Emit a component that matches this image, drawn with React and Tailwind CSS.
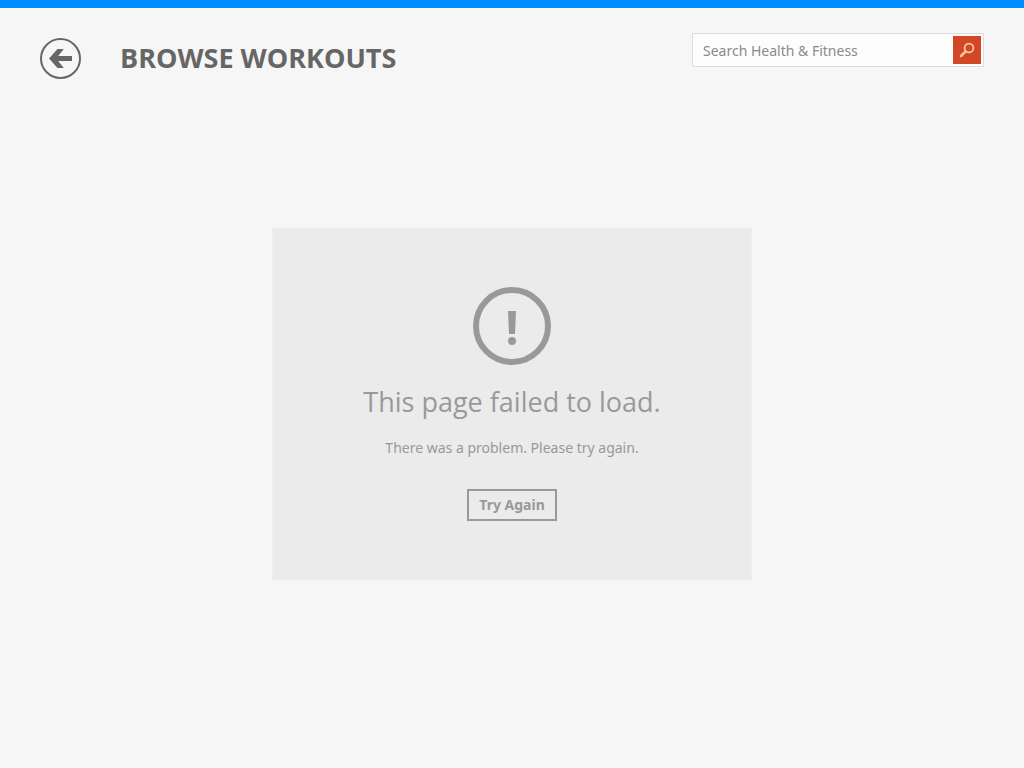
import { useState } from 'react';

const BackButton = () => (
  <button type="button" aria-label="Back" className="w-[41px] h-[41px] shrink-0 text-[#666666]">
    <svg viewBox="0 0 41 41" className="w-full h-full" aria-hidden="true">
      <circle cx="20.5" cy="20.5" r="19.5" fill="none" stroke="currentColor" strokeWidth="2" />
      <path d="M9 20.5 17.5 11h6.3l-5.6 7H32v5H18.2l5.6 7h-6.3z" fill="currentColor" />
    </svg>
  </button>
);

const SearchBox = () => {
  const [query, setQuery] = useState('');

  return (
    <form
      role="search"
      onSubmit={(e) => e.preventDefault()}
      className="flex items-center w-[292px] h-[34px] shrink-0 border border-[#dcdcdc] bg-[#fdfdfd] pr-0.5"
    >
      <input
        type="text"
        aria-label="Search Health & Fitness"
        placeholder="Search Health & Fitness"
        value={query}
        onChange={(e) => setQuery(e.target.value)}
        className="flex-1 min-w-0 h-full px-2.5 bg-transparent text-sm text-[#666666] placeholder:text-[#8a8a8a] outline-none"
      />
      <button type="submit" aria-label="Search" className="w-7 h-7 shrink-0 bg-[#d24726]">
        <svg viewBox="0 0 28 28" className="w-full h-full" aria-hidden="true">
          <circle cx="16" cy="12" r="4.4" fill="none" stroke="#fbc79c" strokeWidth="1.8" />
          <path d="M12.6 15.4 8 20" stroke="#fbc79c" strokeWidth="2.6" strokeLinecap="round" />
        </svg>
      </button>
    </form>
  );
};

const ErrorPanel = ({ onRetry }) => (
  <section className="flex flex-col items-center w-full max-w-[480px] bg-[#ebebeb] border-x border-[#f0f0f0] pt-[59px] pb-[59px] text-center text-[#999999]">
    <svg viewBox="0 0 78 78" className="w-[78px] h-[78px]" aria-hidden="true">
      <circle cx="39" cy="39" r="36" fill="none" stroke="currentColor" strokeWidth="6" />
      <path d="M35 24h8l-1 23h-6z" fill="currentColor" />
      <circle cx="39" cy="54" r="4" fill="currentColor" />
    </svg>
    <h2 className="mt-[17px] font-['Open_Sans',sans-serif] text-[27px] leading-10">This page failed to load.</h2>
    <p className="mt-3.5 text-sm leading-6">There was a problem. Please try again.</p>
    <button
      type="button"
      onClick={onRetry}
      className="mt-[29px] h-8 px-2.5 border-2 border-[#999999] text-sm leading-5 font-bold"
    >
      Try Again
    </button>
  </section>
);

const App = () => {
  return (
    <div className="min-h-screen flex flex-col bg-[#f6f6f6] border-t-8 border-[#008cff] font-['Noto_Sans','Open_Sans',sans-serif]">
      <header className="flex items-start justify-between px-10 pt-[25px]">
        <div className="flex items-start gap-[39px] pt-[5px]">
          <BackButton />
          <h1 className="font-['Open_Sans',sans-serif] text-[27px] leading-10 font-bold text-[#666666]">BROWSE WORKOUTS</h1>
        </div>
        <SearchBox />
      </header>

      <main className="flex justify-center px-10 pt-[149px]">
        <ErrorPanel onRetry={() => window.location.reload()} />
      </main>
    </div>
  );
};

export default App;
